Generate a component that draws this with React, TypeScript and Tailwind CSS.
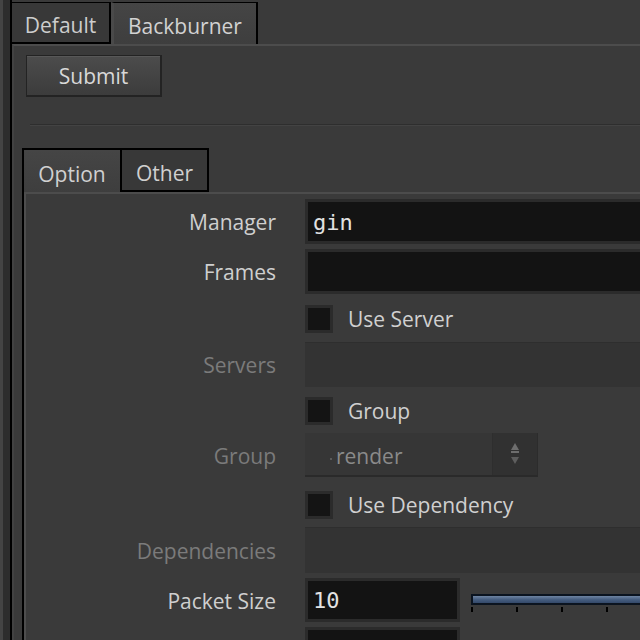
import type { ReactNode } from 'react';

const Field = ({ text, className = '' }: { text?: string; className?: string }) => (
  <div
    className={`shrink-0 h-full border-[3px] border-[#2b2b2b] bg-[#131313] flex items-center pl-[5px] pt-[2px] font-['DejaVu_Sans_Mono',monospace] text-[22px] text-[#e2e2e2] ${className}`}
  >
    {text}
  </div>
);

const DisabledField = () => (
  <div className="shrink-0 w-[360px] h-full bg-[#333333] border-t border-[#2e2e2e]" />
);

const Check = ({ label }: { label: string }) => (
  <div className="flex items-center gap-[15px] h-full">
    <div className="w-[28px] h-[28px] border-[3px] border-[#2b2b2b] bg-[#141414]" />
    <span className="text-[#d0d0d0]">{label}</span>
  </div>
);

interface RowProps {
  label?: string;
  disabled?: boolean;
  className: string;
  children: ReactNode;
  align?: string;
}

const Row = ({ label, disabled, className, children, align = 'items-center' }: RowProps) => (
  <div className={`flex ${align} ${className}`}>
    <div
      className={`w-[250px] shrink-0 self-center pt-[2px] text-right ${disabled ? 'text-[#7b7b7b]' : 'text-[#cfcfcf]'}`}
    >
      {label}
    </div>
    <div className="ml-[29px] flex-1 h-full flex">{children}</div>
  </div>
);

export default function App() {
  return (
    <div className="w-[640px] h-[640px] overflow-hidden flex bg-[#3a3a3a] font-['Open_Sans',sans-serif] text-[21px] leading-none">
      {/* left gutter */}
      <div className="w-[3px] shrink-0 bg-[#444444]" />
      <div className="w-[7px] shrink-0 bg-[#2d2d2d]" />

      <div className="flex-1 min-w-0 flex flex-col border-l-2 border-black">
        {/* top tabs */}
        <div className="h-[44px] shrink-0 flex items-end">
          <div className="w-[99px] h-[42px] pt-[6px] border-t border-r-2 border-b-2 border-black bg-[#383838] flex items-center justify-center text-[#cdcdcd]">
            Default
          </div>
          <div className="w-[147px] h-[42px] pt-[6px] border-t border-r-2 border-black border-l-[3px] border-l-[#4a4a4a] bg-linear-to-b from-[#454545] to-[#3e3e3e] flex items-center justify-center text-[#d2d2d2]">
            Backburner
          </div>
        </div>

        {/* main panel */}
        <div className="flex-1 flex flex-col border-t-2 border-[#4c4c4c] border-l-2 border-l-[#424242]">
          <button className="ml-[12px] mt-[9px] w-[136px] h-[42px] pt-[2px] border border-[#232323] border-r-2 border-b-2 bg-linear-to-b from-[#4c4c4c] to-[#3c3c3c] shadow-[inset_0_1px_0_#585858] text-[#d8d8d8] flex items-center justify-center">
            Submit
          </button>

          <div className="ml-[16px] mt-[27px] h-[2px] border-t border-[#2e2e2e] border-b border-b-[#434343]" />

          {/* inner tab widget */}
          <div className="ml-[8px] mt-[22px] flex-1 flex flex-col border-l-2 border-black">
            <div className="h-[44px] shrink-0 flex">
              <div className="w-[96px] h-[44px] pt-[6px] border-t-2 border-black bg-linear-to-b from-[#454545] to-[#3e3e3e] flex items-center justify-center text-[#d0d0d0]">
                Option
              </div>
              <div className="w-[89px] h-[44px] pt-[6px] border-2 border-black bg-[#383838] flex items-center justify-center text-[#d0d0d0]">
                Other
              </div>
            </div>

            <div className="flex-1 flex flex-col border-t-2 border-[#4c4c4c] border-l-2 border-l-[#4e4e4e]">
              <Row label="Manager" className="mt-[5px] h-[45px]">
                <Field text="gin" className="w-[360px]" />
              </Row>
              <Row label="Frames" className="mt-[5px] h-[45px]">
                <Field className="w-[360px]" />
              </Row>
              <Row className="mt-[11px] h-[28px]">
                <Check label="Use Server" />
              </Row>
              <Row label="Servers" disabled className="mt-[9px] h-[45px]">
                <DisabledField />
              </Row>
              <Row className="mt-[10px] h-[28px]">
                <Check label="Group" />
              </Row>
              <Row label="Group" disabled className="mt-[8px] h-[44px]">
                <div className="w-[233px] h-full flex bg-[#363636] border-b-2 border-[#2a2a2a] border-r border-r-[#2c2c2c]">
                  <div className="flex-1 flex items-center pl-[25px] pt-[4px] gap-[4px] text-[#8a8a8a]">
                    <span className="w-[2px] h-[2px] mt-[6px] bg-[#5a5a5a]" />
                    <span>render</span>
                  </div>
                  <div className="w-[45px] h-full bg-[#313131] border-l border-[#2e2e2e] flex items-center justify-center">
                    <svg width="10" height="24" viewBox="0 0 10 24">
                      <path d="M5 1 L9 8 L1 8 Z" fill="#6e6e6e" />
                      <rect x="1" y="9" width="8" height="2" fill="#6e6e6e" />
                      <path d="M1 15 L9 15 L5 22 Z" fill="#5e5e5e" />
                    </svg>
                  </div>
                </div>
              </Row>
              <Row className="mt-[14px] h-[28px]">
                <Check label="Use Dependency" />
              </Row>
              <Row label="Dependencies" disabled className="mt-[8px] h-[46px]">
                <DisabledField />
              </Row>
              <Row label="Packet Size" className="mt-[5px] h-[44px]">
                <Field text="10" className="w-[155px]" />
                <div className="ml-[11px] mt-[16px] w-[220px] shrink-0 flex flex-col">
                  <div className="h-[11px] border-2 border-[#0b1420] bg-linear-to-b from-[#6e84a2] via-[#465e80] to-[#34496a]" />
                  <div className="mt-[2px] flex gap-[43px]">
                    <div className="w-[2px] h-[5px] bg-black" />
                    <div className="w-[2px] h-[5px] bg-black" />
                    <div className="w-[2px] h-[5px] bg-black" />
                    <div className="w-[2px] h-[5px] bg-black" />
                  </div>
                </div>
              </Row>
              <Row className="mt-[5px] h-[45px] shrink-0">
                <Field className="w-[155px]" />
              </Row>
            </div>
          </div>
        </div>
      </div>
    </div>
  );
}
